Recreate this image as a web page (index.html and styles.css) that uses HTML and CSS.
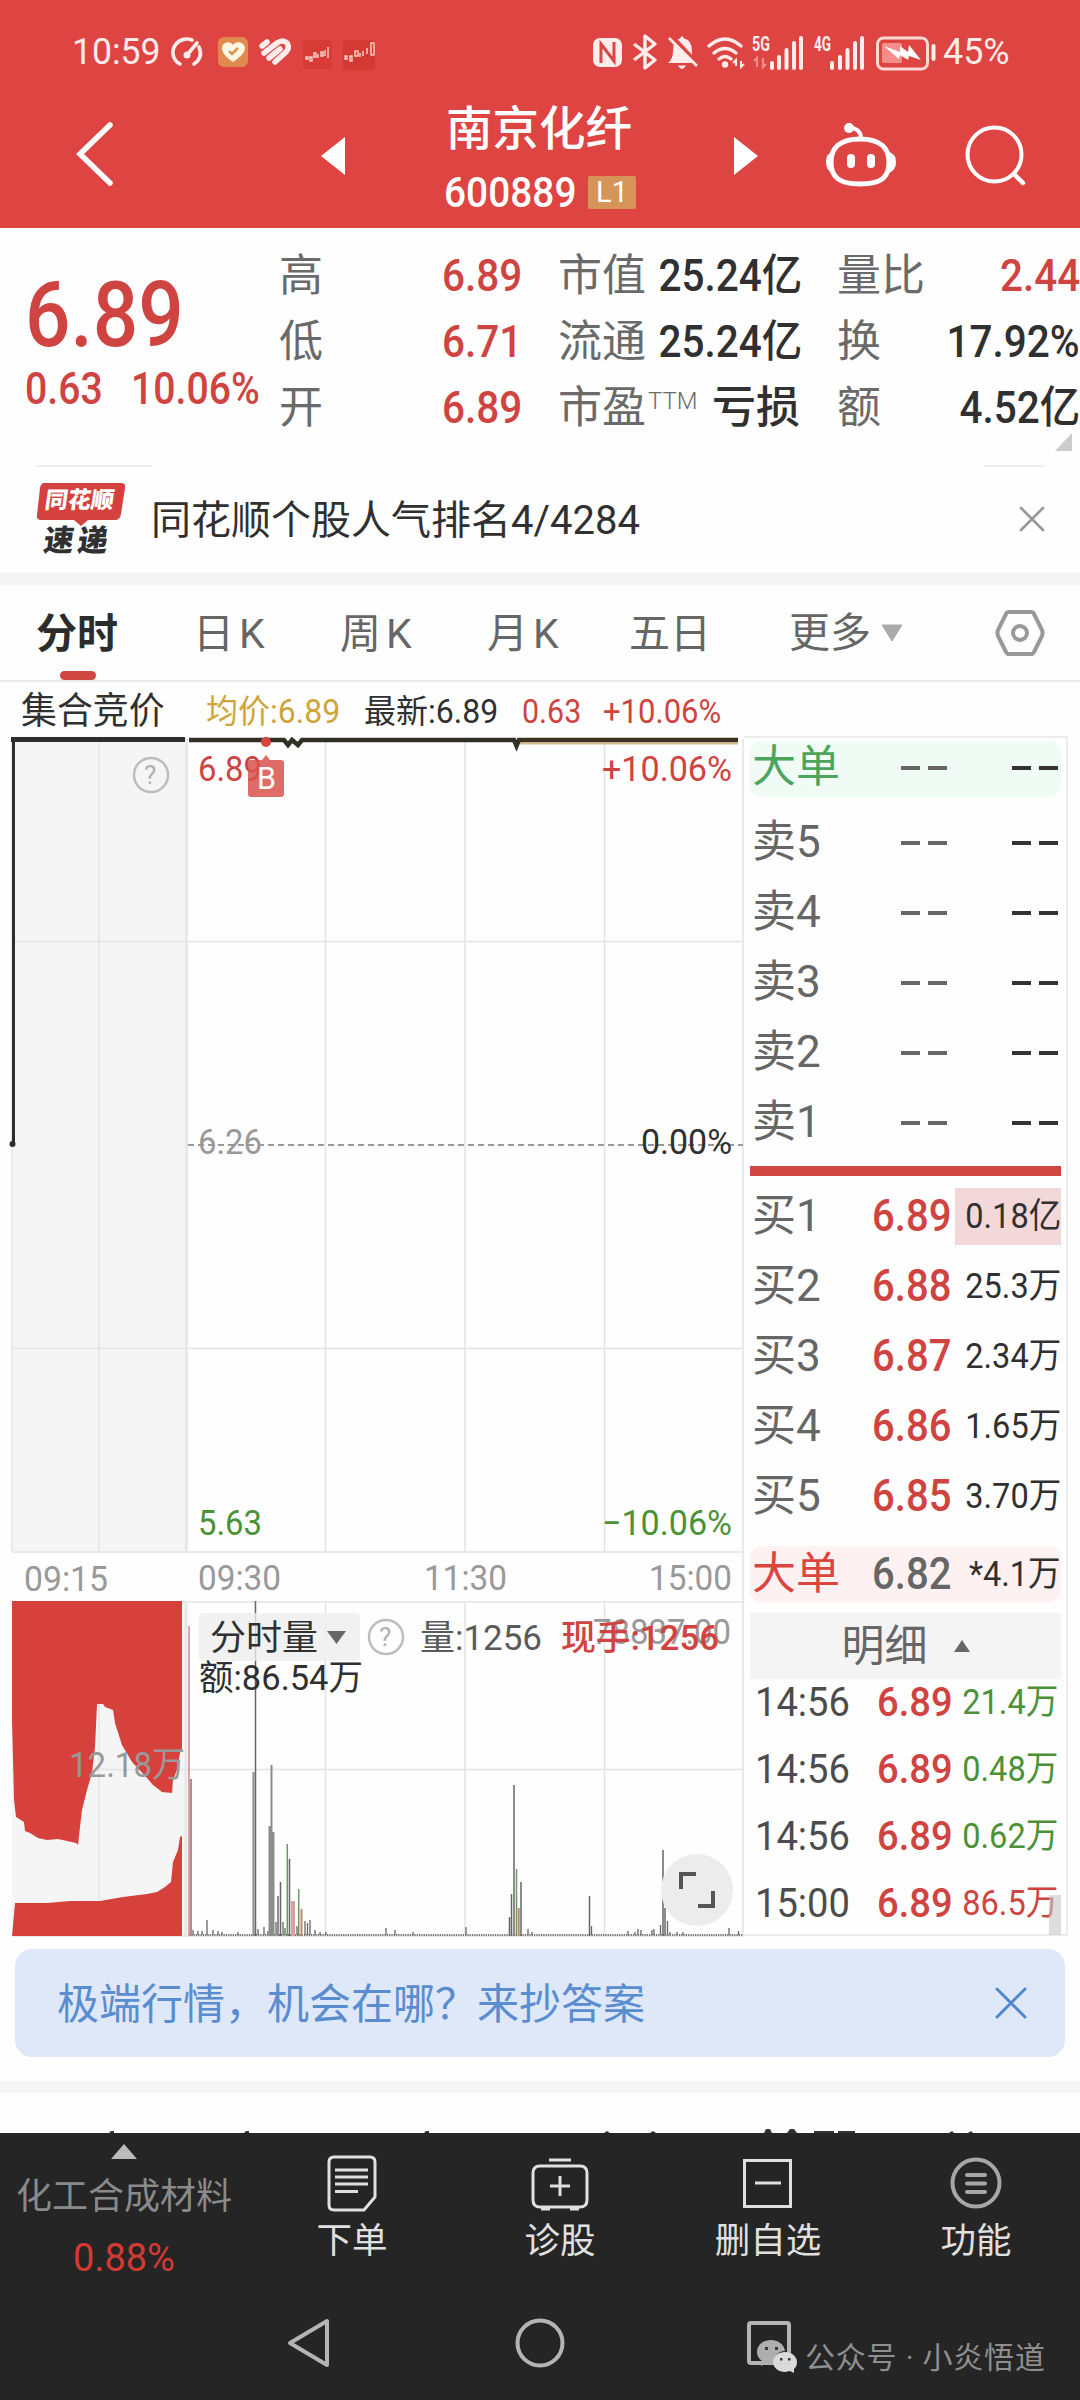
FILE: index.html
```html
<!DOCTYPE html>
<html lang="zh-CN">
<head>
    <meta charset="UTF-8">
    <meta name="viewport" content="width=device-width, initial-scale=1.0">
    <title>南京化纤 600889</title>
    <link rel="stylesheet" href="styles.css">
</head>
<body>
    <header class="header">
        <div class="status-bar">
            <span class="clock"><span class="narrow">10:59</span></span>
            <svg class="status-left" width="216" height="40" viewBox="166 32 216 40">
                <g fill="none" stroke="#ffeceb" stroke-width="3.600" stroke-linecap="round">
                    <path d="M180 64 C172 60 171 50 176 44 C180 39 187 38 192 40"/>
                    <path d="M199 47 C202 54 200 60 194 64"/>
                    <path d="M187 55 L197 43"/>
                </g>
                <circle cx="187" cy="55" r="3.500" fill="#ffeceb"/>
                <rect x="218" y="37" width="30" height="30" rx="6" fill="#e08a50"/>
                <path d="M233 62 C226 57 222 53 222 48 C222 42 230 40 233 45 C236 40 245 42 245 48 C245 53 240 57 233 62Z" fill="#fff6e4"/>
                <path d="M229 51 L232 54 L238 48" fill="none" stroke="#dc9250" stroke-width="2.600"/>
                <g fill="none" stroke="#ffeceb" stroke-width="5.500" stroke-linecap="round">
                    <path d="M262 46 L267 42"/>
                    <path d="M264 53 L277 43 Q283 39 287 43 Q290 48 286 52 L275 62"/>
                    <path d="M269 58 L280 49"/>
                </g>
                <rect x="303" y="40" width="29" height="29" rx="4" fill="#d63b35"/>
                <rect x="343" y="40" width="32" height="30" rx="4" fill="#d33a33"/>
                <g fill="none" stroke="#fbd0c8" stroke-width="1.400">
                    <path d="M306 57h2v2h-2zM310 57v4h2v-4zM314 53v4h2v-4zM318 54v4M321 52v4h2v-4zM325 50v6M328 47v11"/>
                    <path d="M345 56h2v3h-2zM350 56v5h2v-5zM355 51v5h3v-5zM360 53v4M363 51v5M367 48v6M371 43v12h3v-12z"/>
                </g>
            </svg>
            <svg class="status-right" width="350" height="40" viewBox="590 32 350 40">
                <rect x="593" y="38" width="29" height="29" rx="7" fill="#ffeceb"/>
                <path d="M601 63V44l13 17V42" fill="none" stroke="#de4442" stroke-width="3"/>
                <path d="M634 44 L655 60 L645 68 V36 L655 44 L634 60" fill="none" stroke="#ffeceb" stroke-width="3.400" stroke-linejoin="round"/>
                <path d="M668 63 Q673 59 673 51 Q673 40 680 38.500 Q682 34 684 38.500 Q692 40 692 51 Q692 59 694 63Z M678 65.500h8q-4 7-8 0z" fill="#ffeceb"/>
                <path d="M671 36 L699 66" stroke="#de4442" stroke-width="5"/>
                <path d="M669 38 L697 66" stroke="#ffeceb" stroke-width="2.600"/>
                <g fill="none" stroke="#ffeceb" stroke-width="3.400" stroke-linecap="round">
                    <path d="M709 46 Q725 32 741 46"/>
                    <path d="M714 53 Q725 44 736 53"/>
                    <path d="M719 59 Q725 54 731 59"/>
                </g>
                <circle cx="725" cy="64.500" r="3.200" fill="#ffeceb"/>
                <path d="M733 63l3-3v6M741 61v6l3-3" stroke="#ffeceb" stroke-width="2" fill="none"/>
                <text x="752" y="51" class="net" textLength="18" lengthAdjust="spacingAndGlyphs">5G</text>
                <path d="M754 61l3-3v9M763 58v9l3-3" stroke="#f08d89" stroke-width="2.200" fill="none"/>
                <path d="M772 68v-5M779 68V57M786.500 68V50M794 68V43M801 68V38" stroke="#ffeceb" stroke-width="4" stroke-linecap="round"/>
                <text x="814" y="51" class="net" textLength="17" lengthAdjust="spacingAndGlyphs">4G</text>
                <path d="M832 68v-5M840 68V57M847.500 68V50M855 68V43M862 68V38" stroke="#ffeceb" stroke-width="4" stroke-linecap="round"/>
                <rect x="877.500" y="38" width="50" height="31" rx="6" fill="none" stroke="#ffd9d6" stroke-width="3"/>
                <rect x="882" y="43" width="20" height="20" rx="2" fill="#f38f8b"/>
                <path d="M933.500 46v13" stroke="#ffeceb" stroke-width="4" stroke-linecap="round"/>
                <path d="M884 46 L900 52 L900 46 L908 52 L909 45 L921 60 L909 56 L908 60 L900 55 L899 59Z" fill="#fff"/>
            </svg>
            <span class="battery-text"><span class="narrow">45%</span></span>
        </div>
        <div class="nav-bar">
            <svg class="back" width="40" height="66" viewBox="0 0 40 66"><path d="M35 4 L5 33 L35 62" fill="none" stroke="#fff" stroke-width="5.500" stroke-linecap="round"/></svg>
            <svg class="prev" width="24" height="38" viewBox="0 0 24 38"><path d="M24 0V38L0 19Z" fill="#fff"/></svg>
            <div class="title">
                <div class="stock-name">南京化纤</div>
                <div class="stock-code"><span class="code"><span class="narrow">600889</span></span><span class="level">L1</span></div>
            </div>
            <svg class="next" width="24" height="38" viewBox="0 0 24 38"><path d="M0 0V38L24 19Z" fill="#fff"/></svg>
            <svg class="robot" width="72" height="66" viewBox="825 122 72 66">
                <path d="M860 139 C880 139 889 148 889 162 C889 177 882 184 860 184 C839 184 831 177 831 162 C831 148 840 139 860 139Z" fill="none" stroke="#fff" stroke-width="5"/>
                <path d="M861 138 Q861 129 849 127" fill="none" stroke="#fff" stroke-width="4"/>
                <circle cx="849" cy="128" r="5" fill="#fff"/>
                <path d="M832 152 Q826 154 826 162 Q826 170 832 173ZM889 152 Q896 154 896 162 Q896 170 889 173Z" fill="#fff"/>
                <rect x="847" y="154" width="8" height="14" rx="4" fill="#fff"/>
                <rect x="867" y="154" width="8" height="14" rx="4" fill="#fff"/>
            </svg>
            <svg class="search" width="62" height="62" viewBox="964 124 62 62">
                <circle cx="994.500" cy="154.500" r="27" fill="none" stroke="#fff" stroke-width="4"/>
                <path d="M1014 174 L1023 183" stroke="#fff" stroke-width="4.500" stroke-linecap="round"/>
            </svg>
        </div>
    </header>

    <section class="quote">
        <div class="quote-main">
            <div class="price"><span>6.89</span></div>
            <div class="change"><span class="narrow">0.63</span><span class="narrow">10.06%</span></div>
        </div>
        <div class="quote-grid">
            <div class="cell c1"><span>高</span><b class="red">6.89</b></div>
            <div class="cell c2"><span>市值</span><b>25.24亿</b></div>
            <div class="cell c3"><span>量比</span><b class="red">2.44</b></div>
            <div class="cell c1"><span>低</span><b class="red">6.71</b></div>
            <div class="cell c2"><span>流通</span><b>25.24亿</b></div>
            <div class="cell c3"><span>换</span><b>17.92%</b></div>
            <div class="cell c1"><span>开</span><b class="red">6.89</b></div>
            <div class="cell c2"><span>市盈<i>TTM</i></span><b class="cn">亏损</b></div>
            <div class="cell c3"><span>额</span><b>4.52亿</b></div>
        </div>
        <svg class="corner" width="17" height="18" viewBox="0 0 17 18"><path d="M17 0V18H0Z" fill="#ccc"/></svg>
    </section>

    <section class="notice">
        <div class="notice-logo">
            <svg width="92" height="46" viewBox="35 481 92 46">
                <path d="M44 483H121Q126 483 125 488L121 514Q120 520 115 520H88L81 526L74 520H41Q36 520 37 515L40 488Q41 483 44 483Z" fill="#d4413e"/>
            </svg>
            <span class="logo-top">同花顺</span>
            <span class="logo-bottom">速递</span>
        </div>
        <div class="notice-text">同花顺个股人气排名4/4284</div>
        <svg class="notice-close" width="26" height="26" viewBox="0 0 26 26"><path d="M2 2L24 24M24 2L2 24" stroke="#999" stroke-width="2.600" stroke-linecap="round"/></svg>
    </section>

    <nav class="tabs">
        <span class="tab active">分时</span>
        <span class="tab k">日K</span>
        <span class="tab k">周K</span>
        <span class="tab k">月K</span>
        <span class="tab">五日</span>
        <span class="tab more">更多<svg width="22" height="18" viewBox="0 0 22 18"><path d="M1 1H21L11 17Z" fill="#aaa" stroke="#aaa" stroke-linejoin="round"/></svg></span>
        <svg class="settings" width="50" height="48" viewBox="0 0 50 48">
            <path d="M14 3H36Q38 3 39 5L47 21Q48 24 47 27L39 43Q38 45 36 45H14Q12 45 11 43L3 27Q2 24 3 21L11 5Q12 3 14 3Z" fill="none" stroke="#999" stroke-width="4"/>
            <circle cx="25" cy="24" r="7" fill="none" stroke="#999" stroke-width="4"/>
        </svg>
    </nav>

    <main class="board">
        <div class="chart">
            <div class="chart-head">
                <span class="auction">集合竞价</span>
                <span class="avg">均价:6.89</span>
                <span class="last">最新:6.89</span>
                <span class="red diff">0.63</span>
                <span class="red pct">+10.06%</span>
            </div>
            <svg class="chart-canvas" width="744" height="1204" viewBox="0 736 744 1204">
                <rect x="12" y="739" width="174" height="813" fill="#f5f5f5"/>
                <rect x="12" y="1601" width="174" height="335" fill="#f5f5f5"/>
                <!-- grid -->
                <g stroke="#e4e4e4" stroke-width="1.500" fill="none">
                    <path d="M12 941.500H743M12 1348.500H743M12 1552H743M12 1602H743M12 1769.500H743M12 1936H743"/>
                    <path d="M12 739V1552M99 739V1552M325.500 739V1552M465 739V1552M604.500 739V1552M743 739V1936"/>
                    <path d="M99 1602V1936M325.500 1602V1936M465 1602V1936M604.500 1602V1936"/>
                </g>
                <path d="M186.500 739V1552M186 1602V1936" stroke="#e8e8e8" stroke-width="3"/>
                <path d="M188 1145H743" stroke="#999" stroke-width="1.800" stroke-dasharray="6 4"/>

                <!-- price line -->
                <path d="M13.500 1144V740H184" fill="none" stroke="#2d2d2d" stroke-width="3"/>
                <path d="M11 739.500H185" stroke="#2d2d2d" stroke-width="5"/>
                <circle cx="12.500" cy="1144" r="3" fill="#2d2d2d"/>
                <path d="M520 743.500H738" stroke="#d8ba85" stroke-width="2"/>
                <path d="M189 740H284L288 745L292 740L298 745L302 740H514L516.500 746L519 740H738" fill="none" stroke="#303026" stroke-width="4.500"/>
                <path d="M520 740H738" stroke="#3f301f" stroke-width="4"/>

                <!-- auction volume -->
                <path d="M12 1601H182V1749L180 1753L177 1770L173 1780L172 1793L162 1792L153 1785L147 1778L132 1762L122 1745L115 1723L113 1710L105 1707L103 1704L97 1704L95 1747L92 1773L87 1790L82 1810L80 1827L78 1845L76 1843L58 1839L47 1840L38 1838L30 1833L25 1831L24 1822L16 1817L14 1800L12 1720Z" fill="#d6423b"/>
                <path d="M12 1936L15 1903H47L70 1901H100L123 1897L147 1894L157 1892L165 1887L171 1882L173 1862L178 1850L180 1837L182 1836V1936Z" fill="#d6423b"/>

                <!-- minute volume -->
                <path d="M189 1935H743" stroke="#777" stroke-width="2" stroke-dasharray="1.300 1"/>
                <path d="M193 1935v-5M198 1935v-4M202 1935v-4M207 1935v-15M213 1935v-5M218 1935v-4M222 1935v-3M238 1935v-3M258 1935v-6M264 1935v-8M268 1935v-4M276 1935v-13M283 1935v-13M285 1935v-7M297 1935v-9M305 1935v-14M307.500 1935v-12M310 1935v-15M315 1935v-5M320 1935v-3M326 1935v-3M386 1935v-7M395 1935v-5M413 1935v-3M466 1935v-8M528 1935v-6M532 1935v-3M591.500 1935v-9M628 1935v-4M635 1935v-3M638 1935v-6M641 1935v-5M652 1935v-5M654 1935v-6M660.500 1935v-10M667.500 1935v-14M670 1935v-3M677 1935v-3M683 1935v-3M729 1935v-7M738.500 1935v-4" stroke="#666" stroke-width="1.300"/>
                <path d="M189 1936V1626" stroke="#d08688" stroke-width="1.500"/>
                <path d="M191 1936V1779" stroke="#b48b8c" stroke-width="2"/>
                <path d="M253.500 1936V1772M269.500 1936V1826M271.500 1936V1765M278 1936V1896M273.500 1936V1832M514 1936V1785M665 1936V1908" stroke="#8d8d8d" stroke-width="2"/>
                <path d="M255.500 1936V1601M280.500 1936V1882M289.500 1936V1859M509.500 1936V1917M511.500 1936V1894M521 1936V1882M589.500 1936V1896M663 1936V1850" stroke="#666" stroke-width="1.500"/>
                <path d="M287.300 1936V1844M298.700 1936V1889M516.500 1936V1869" stroke="#6a9a63" stroke-width="1.500"/>
                <path d="M293 1936V1901" stroke="#d2a1a1" stroke-width="4"/>
                <path d="M301.500 1936V1909M518.700 1936V1908" stroke="#bd8a6d" stroke-width="2"/>

                <!-- buy point -->
                <circle cx="266" cy="742" r="5" fill="#d5453e"/>
                <text x="198" y="781" class="t red" textLength="64" lengthAdjust="spacingAndGlyphs">6.89</text>
                <path d="M251 760H262L266 755L270 760H281Q284 760 284 763V794Q284 797 281 797H251Q248 797 248 794V763Q248 760 251 760Z" fill="#d9524e" opacity=".85"/>
                <text x="257" y="789" class="t buy" textLength="19" lengthAdjust="spacingAndGlyphs">B</text>

                <!-- axis labels -->
                <text x="602" y="781" class="t red" textLength="130" lengthAdjust="spacingAndGlyphs">+10.06%</text>
                <text x="198" y="1154" class="t gray" textLength="64" lengthAdjust="spacingAndGlyphs">6.26</text>
                <text x="641" y="1154" class="t dark" textLength="91" lengthAdjust="spacingAndGlyphs">0.00%</text>
                <text x="198" y="1535" class="t green" textLength="64" lengthAdjust="spacingAndGlyphs">5.63</text>
                <text x="602" y="1535" class="t green" textLength="130" lengthAdjust="spacingAndGlyphs">−10.06%</text>
                <text x="24" y="1591" class="t gray" textLength="84" lengthAdjust="spacingAndGlyphs">09:15</text>
                <text x="198" y="1590" class="t gray" textLength="83" lengthAdjust="spacingAndGlyphs">09:30</text>
                <text x="424" y="1590" class="t gray" textLength="83" lengthAdjust="spacingAndGlyphs">11:30</text>
                <text x="649" y="1590" class="t gray" textLength="83" lengthAdjust="spacingAndGlyphs">15:00</text>
                <text x="69" y="1777" class="t gray" textLength="116" lengthAdjust="spacingAndGlyphs">12.18万</text>

                <circle cx="151" cy="775" r="17" class="help"/>
                <text x="144" y="784" class="help-mark">?</text>

                <!-- volume legend -->
                <rect x="199" y="1613" width="161" height="48" rx="4" fill="#eee" opacity=".8"/>
                <text x="210" y="1650" class="t dark" textLength="108" lengthAdjust="spacingAndGlyphs">分时量</text>
                <path d="M327 1631H346L336.500 1644Z" fill="#666"/>
                <circle cx="386" cy="1637" r="17" class="help"/>
                <text x="379" y="1646" class="help-mark">?</text>
                <text x="420" y="1650" class="t mid" textLength="122" lengthAdjust="spacingAndGlyphs">量:1256</text>
                <text x="593" y="1644" class="t gray" textLength="138" lengthAdjust="spacingAndGlyphs">78837.00</text>
                <text x="561" y="1650" class="t red bold" textLength="158" lengthAdjust="spacingAndGlyphs">现手:1256</text>
                <text x="199" y="1690" class="t dark" textLength="164" lengthAdjust="spacingAndGlyphs">额:86.54万</text>

                <circle cx="697" cy="1890" r="36" fill="#ececec"/>
                <path d="M681 1889V1874H696M713 1891V1906H698" fill="none" stroke="#555" stroke-width="4"/>
            </svg>
        </div>

        <aside class="book">
            <div class="big sell"><span>大单</span><em></em><em class="dk"></em></div>
            <div class="asks">
                <div class="row"><span>卖5</span><em></em><em class="dk"></em></div>
                <div class="row"><span>卖4</span><em></em><em class="dk"></em></div>
                <div class="row"><span>卖3</span><em></em><em class="dk"></em></div>
                <div class="row"><span>卖2</span><em></em><em class="dk"></em></div>
                <div class="row"><span>卖1</span><em></em><em class="dk"></em></div>
            </div>
            <div class="divider"></div>
            <div class="bids">
                <div class="row"><span>买1</span><b class="red">6.89</b><u class="hot"><s>0.18亿</s></u></div>
                <div class="row"><span>买2</span><b class="red">6.88</b><u><s>25.3万</s></u></div>
                <div class="row"><span>买3</span><b class="red">6.87</b><u><s>2.34万</s></u></div>
                <div class="row"><span>买4</span><b class="red">6.86</b><u><s>1.65万</s></u></div>
                <div class="row"><span>买5</span><b class="red">6.85</b><u><s>3.70万</s></u></div>
            </div>
            <div class="big buy"><span>大单</span><b>6.82</b><u><s>*4.1万</s></u></div>
            <div class="detail">明细<svg width="16" height="12" viewBox="0 0 16 12"><path d="M0 12H16L8 0Z" fill="#666"/></svg></div>
            <div class="ticks">
                <div class="tick"><span>14:56</span><b>6.89</b><u class="green"><s>21.4万</s></u></div>
                <div class="tick"><span>14:56</span><b>6.89</b><u class="green"><s>0.48万</s></u></div>
                <div class="tick"><span>14:56</span><b>6.89</b><u class="green"><s>0.62万</s></u></div>
                <div class="tick"><span>15:00</span><b>6.89</b><u class="red"><s>86.5万</s></u></div>
                <i class="scrollbar"></i>
            </div>
        </aside>
    </main>

    <section class="promo">
        <span>极端行情，机会在哪？来抄答案</span>
        <svg width="32" height="32" viewBox="0 0 32 32"><path d="M2 2L30 30M30 2L2 30" stroke="#4f86d0" stroke-width="3" stroke-linecap="round"/></svg>
    </section>

    <section class="next-card">
        <!-- tops of the next section's tab titles, cut by the toolbar -->
        <svg width="1080" height="4" viewBox="0 2129 1080 4">
            <path d="M109 2133l2-2h3v2zM244 2133l2-2h3v2zM424 2133l2-2h3v2zM604 2133l3-2 3 2zM650 2133l3-2 3 2zM764 2133l2-4h4l2 4zM787 2133l3-4h4l3 4zM814 2131h20v2h-20zM838 2131h17v2h-17zM949 2133l3-2 2 2zM968 2133l3-2 2 2z" fill="#333"/>
        </svg>
    </section>

    <footer class="footer">
        <div class="toolbar">
            <div class="industry">
                <svg width="26" height="15" viewBox="0 0 26 15"><path d="M0 15H26L13 0Z" fill="#bbb"/></svg>
                <span class="industry-name">化工合成材料</span>
                <span class="industry-pct">0.88%</span>
            </div>
            <div class="tool">
                <svg width="60" height="60" viewBox="0 0 60 60" fill="none" stroke="#e0e0e0" stroke-width="3">
                    <path d="M12 4H48Q53 4 53 9V44L42 57H12Q7 57 7 52V9Q7 4 12 4Z"/>
                    <path d="M13 17H46M13 24H46M13 31H46M13 38.500H36"/>
                </svg>
                <span>下单</span>
            </div>
            <div class="tool">
                <svg width="60" height="60" viewBox="0 0 60 60" fill="none" stroke="#e0e0e0" stroke-width="3">
                    <path d="M19 7H41M10 13H50Q57 13 57 20V47Q57 54 50 54H10Q3 54 3 47V20Q3 13 10 13ZM11 56H20M40 56H49M30 23V43M20 33H40"/>
                </svg>
                <span>诊股</span>
            </div>
            <div class="tool">
                <svg width="60" height="60" viewBox="0 0 60 60" fill="none" stroke="#e0e0e0" stroke-width="3">
                    <rect x="6.500" y="7.500" width="46" height="46"/>
                    <path d="M17 30H43"/>
                </svg>
                <span>删自选</span>
            </div>
            <div class="tool">
                <svg width="60" height="60" viewBox="0 0 60 60" fill="none" stroke="#a6a6a6" stroke-width="4">
                    <circle cx="30" cy="30" r="23.500"/>
                    <path d="M21 22H39M21 30.500H39M21 39H39" stroke-linecap="round"/>
                </svg>
                <span>功能</span>
            </div>
        </div>
        <div class="sys-nav">
            <svg width="520" height="60" viewBox="280 2313 520 60" fill="none" stroke="#b4b4b4" stroke-width="4">
                <path d="M327 2321V2365L290 2343Z" stroke-linejoin="round"/>
                <circle cx="540" cy="2343" r="22.500"/>
                <rect x="749" y="2323" width="40" height="40" rx="2"/>
                <g stroke="none">
                    <path d="M771 2340C763 2340 757 2345 757 2352C757 2356 759 2359 762 2361L761 2366L767 2363C769 2364 772 2364 774 2363C774 2355 779 2351 785 2351C784 2344 778 2340 771 2340Z" fill="#aeaeae"/>
                    <path d="M785 2352C779 2352 773 2356 773 2362C773 2368 779 2372 785 2372L790 2371L794 2373L794 2369C796 2367 797 2365 797 2362C797 2356 791 2352 785 2352Z" fill="#dadada"/>
                    <path d="M765 2347h3v3h-3zM775 2347h3v3h-3zM780 2358h2.500v2.500h-2.500zM788 2358h2.500v2.500h-2.500z" fill="#3a3a3a"/>
                </g>
            </svg>
            <span class="watermark">公众号 · 小炎悟道</span>
        </div>
    </footer>
</body>
</html>
```

FILE: styles.css
```css
* {
    margin: 0;
    padding: 0;
    box-sizing: border-box;
}

body {
    width: 1080px;
    height: 2400px;
    overflow: hidden;
    background: #fefefe;
    color: #303030;
    font-family: Roboto, "Noto Sans CJK SC", sans-serif;
}

svg {
    display: block;
    flex: none;
}

b, em, i, u, s {
    font-style: normal;
    font-weight: normal;
    text-decoration: none;
}

.red { color: #cf4340; }
.green { color: #4a9138; }

/* digits are set a bit narrower than the font's own */
.narrow {
    display: inline-block;
    transform: scaleX(0.9);
    transform-origin: left center;
}

/* header */
.header {
    height: 228px;
    background: #de4442;
    color: #fff;
}

.status-bar {
    display: flex;
    align-items: center;
    height: 72px;
    padding: 32px 0 0 72px;
    color: #ffeceb;
    font-size: 37px;
    line-height: 40px;
}

.clock { width: 94px; }
.clock .narrow { transform: scaleX(0.96); }
.status-right { margin-left: 208px; }
.battery-text { margin-left: 3px; }
.battery-text .narrow { transform: scaleX(0.97); }

.net {
    font-size: 20px;
    font-weight: 700;
    fill: #ffeceb;
}

.nav-bar {
    display: flex;
    height: 156px;
}

.back { margin: 49px 0 0 75px; }
.prev { margin: 65px 0 0 206px; }

.title {
    width: 190px;
    margin: 26px 0 0 101px;
}

.stock-name {
    height: 62px;
    font-size: 46.5px;
    font-weight: 500;
    line-height: 62px;
}

.stock-code {
    display: flex;
    align-items: center;
    height: 60px;
    margin-top: 2px;
    font-size: 42px;
    font-weight: 500;
}

.code { width: 142px; }

.code .narrow {
    margin-left: -2px;
    transform: scaleX(0.925);
}

.level {
    width: 48px;
    height: 33px;
    border-radius: 2px;
    background: #d69459;
    font-size: 29px;
    font-weight: 400;
    line-height: 33px;
    text-align: center;
}

.next { margin: 65px 0 0 98px; }
.robot { margin: 50px 0 0 67px; }
.search { margin: 52px 0 0 67px; }

/* quote */
.quote {
    position: relative;
    display: flex;
    height: 237px;
    padding-top: 15px;
}

.quote-main {
    width: 280px;
    padding-left: 25px;
    color: #cf4340;
}

.price {
    height: 96px;
    margin: 24px 0 1px;
    font-size: 91px;
    font-weight: 500;
    line-height: 96px;
}

.price span {
    display: inline-block;
    transform: scaleX(0.88);
    transform-origin: left center;
}

.change {
    display: flex;
    gap: 19px;
    font-size: 44px;
    font-weight: 500;
    line-height: 50px;
}

.change .narrow { transform: scaleX(0.89); }

.quote-grid {
    display: grid;
    grid-template-columns: 242px 278px 280px;
    grid-auto-rows: 66px;
    width: 800px;
}

.cell {
    display: flex;
    justify-content: space-between;
    font-size: 44px;
    line-height: 67px;
    white-space: nowrap;
}

.cell span {
    margin-left: -1px;
    color: #6a6a6a;
}

.cell b {
    font-weight: 500;
    transform: scaleX(0.92);
    transform-origin: right center;
}

.cell b.cn { transform: none; }
.c2 { padding-left: 37px; }
.c3 { padding-left: 38px; }

.cell i {
    margin-left: 2px;
    font-size: 24px;
    font-weight: 300;
    vertical-align: 14px;
    line-height: 1;
}

.corner {
    position: absolute;
    right: 8px;
    bottom: 14px;
}

/* notice */
.notice {
    position: relative;
    display: flex;
    align-items: center;
    height: 120px;
    padding: 0 35px 0 35px;
    border-bottom: 12px solid #f4f4f4;
}

.notice::before,
.notice::after {
    content: "";
    position: absolute;
    top: 0;
    left: 37px;
    width: 116px;
    height: 2px;
    background: #eee;
}

.notice::after {
    left: 984px;
    width: 61px;
}

.notice-logo {
    position: relative;
    width: 116px;
    height: 76px;
}

.logo-top,
.logo-bottom {
    position: absolute;
    font-weight: 900;
    transform: skewX(-8deg);
}

.logo-top {
    left: 10px;
    top: 6px;
    color: #fff;
    font-size: 23px;
    line-height: 28px;
}

.logo-bottom {
    left: 9px;
    top: 44px;
    font-size: 30px;
    letter-spacing: 4px;
    line-height: 32px;
}

.notice-text {
    flex: 1;
    padding-bottom: 4px;
    font-size: 40px;
}

/* tabs */
.tabs {
    display: flex;
    height: 97px;
    padding-left: 36px;
    border-bottom: 2px solid #e8e8e8;
    color: #666;
    font-size: 41px;
    line-height: 98px;
}

.tab { width: 152px; }

.tab.active {
    position: relative;
    color: #2c2c2c;
    font-weight: 700;
}

.tab.active::after {
    content: "";
    position: absolute;
    left: 24px;
    bottom: 0;
    width: 36px;
    height: 9px;
    border-radius: 5px;
    background: #d04640;
}

.tab.k {
    width: 147px;
    padding-left: 5px;
    letter-spacing: 5px;
}

.tab.more {
    display: flex;
    align-items: center;
    gap: 10px;
    width: 214px;
    padding-left: 8px;
}

.settings { margin-top: 24px; }

/* chart */
.board {
    display: flex;
    height: 1258px;
}

.chart { width: 744px; }

.chart-head {
    display: flex;
    height: 54px;
    padding-left: 21px;
    font-size: 33px;
    line-height: 60px;
    white-space: nowrap;
}

.chart-head span {
    transform: scaleX(0.97);
    transform-origin: left center;
}

.auction { width: 185px; font-size: 37px; }
.avg { width: 158px; color: #cfa53a; }
.last { width: 158px; }
.chart-head .diff { width: 81px; transform: scaleX(0.92); }
.chart-head .pct { transform: scaleX(0.94); }

.t { font-size: 35px; }
.t.red { fill: #cf4340; }
.t.green { fill: #4a9138; }
.t.gray { fill: #999; }
.t.dark { fill: #303030; }
.t.mid { fill: #5a5a5a; }
.t.bold { font-weight: 500; }
.t.buy { fill: #fff; font-size: 32px; }

.help {
    fill: none;
    stroke: #bdbdbd;
    stroke-width: 2.5;
}

.help-mark {
    font-size: 26px;
    fill: #b0b0b0;
}

/* order book */
.book {
    width: 324px;
    height: 1200px;
    margin-top: 54px;
    padding: 3px 5px 0 6px;
    border: solid #ececec;
    border-width: 2px 2px 2px 0;
}

.row,
.big,
.tick {
    display: flex;
    align-items: center;
    height: 70px;
    padding-left: 3px;
    color: #666;
    font-size: 44px;
    line-height: 1;
    white-space: nowrap;
}

.row span,
.big span {
    width: 120px;
    margin-left: -1px;
}

.row em,
.big em {
    width: 46px;
    height: 4px;
    margin: 2px 0 0 29px;
    background: linear-gradient(90deg, currentColor 19px, transparent 19px 27px, currentColor 27px);
}

.row em.dk,
.big em.dk {
    margin-left: 65px;
    color: #333;
}

.big {
    height: 56px;
    border-radius: 12px;
}

.big.sell {
    padding-bottom: 4px;
    background: #f1fbf6;
}

.big.sell span { color: #4ba55d; }
.asks { padding-top: 10px; }

.divider {
    height: 10px;
    margin: 9px 0 5px;
    background: #cf4643;
}

.row b,
.big b {
    width: 83px;
    font-weight: 500;
    transform: scaleX(0.91);
    transform-origin: left center;
}

.row u,
.big u {
    display: flex;
    flex: 1;
    align-items: center;
    justify-content: flex-end;
    height: 57px;
    color: #303030;
    font-size: 35px;
}

.row s,
.big s,
.tick s {
    transform: scaleX(0.93);
    transform-origin: right center;
}

.row u.hot { background: #f3d8d9; }

.big.buy {
    margin-top: 15px;
    background: #fdf1f1;
}

.big.buy span { color: #dc453f; }

.detail {
    display: flex;
    align-items: center;
    justify-content: center;
    gap: 26px;
    height: 66px;
    margin-top: 11px;
    background: #f4f4f4;
    color: #666;
    font-size: 43px;
    line-height: 1;
}

.ticks {
    position: relative;
    margin-top: -10px;
}

.tick {
    height: 67px;
    padding: 0 3px 0 5px;
    font-size: 41px;
}

.tick span {
    width: 125px;
    color: #4c4c4c;
    transform: scaleX(0.93);
    transform-origin: left center;
}

.tick b {
    width: 78px;
    color: #cf4340;
    font-weight: 500;
    transform: scaleX(0.93);
    transform-origin: left center;
}

.tick u {
    flex: 1;
    display: flex;
    justify-content: flex-end;
    font-size: 35px;
}

.scrollbar {
    position: absolute;
    right: 0;
    bottom: 2px;
    width: 12px;
    height: 40px;
    background: rgba(200, 200, 200, 0.6);
}

/* promo */
.promo {
    display: flex;
    align-items: center;
    justify-content: space-between;
    height: 108px;
    margin: 9px 15px 24px;
    padding: 0 38px 0 42px;
    border-radius: 17px;
    background: #dee8f8;
    color: #5a8cd0;
    font-size: 42px;
}

.promo span { padding-bottom: 5px; }

.next-card {
    height: 52px;
    padding-top: 36px;
    border-top: 12px solid #f5f5f5;
}

/* footer */
.footer {
    height: 267px;
    background: #252525;
    color: #e0e0e0;
}

.toolbar {
    display: flex;
    height: 165px;
}

.industry {
    display: flex;
    flex-direction: column;
    align-items: center;
    width: 248px;
    padding-top: 11px;
}

.industry-name {
    margin-top: 14px;
    color: #8a8a8a;
    font-size: 36px;
    line-height: 48px;
}

.industry-pct {
    margin-top: 12px;
    color: #d43a32;
    font-size: 38px;
    line-height: 50px;
}

.tool {
    display: flex;
    flex-direction: column;
    align-items: center;
    width: 208px;
    padding-top: 20px;
    font-size: 35.5px;
    line-height: 56px;
}

.sys-nav {
    display: flex;
    padding: 15px 0 0 280px;
}

.watermark {
    margin: 15px 0 0 5px;
    color: #8f8f8f;
    font-size: 30px;
    letter-spacing: 0.8px;
    line-height: 60px;
    white-space: nowrap;
}
```
